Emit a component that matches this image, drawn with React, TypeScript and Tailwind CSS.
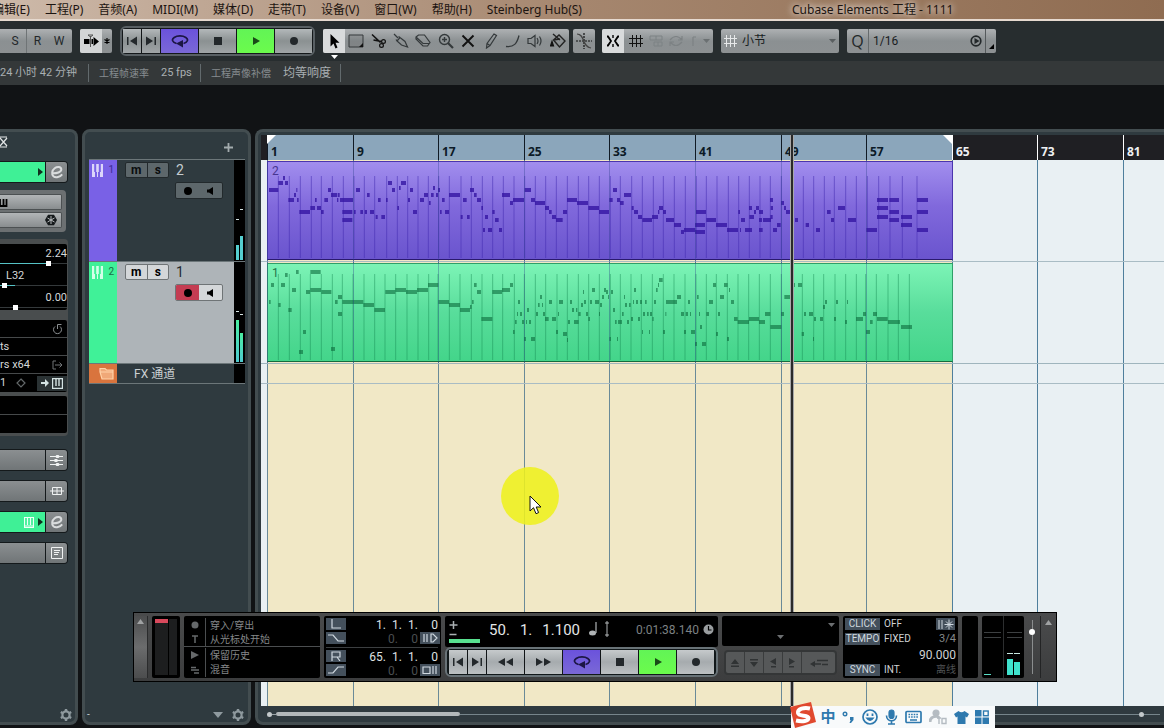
import React from "react";

/* ---------- data ---------- */

const MENUS = ["编辑(E)", "工程(P)", "音频(A)", "MIDI(M)", "媒体(D)", "走带(T)", "设备(V)", "窗口(W)", "帮助(H)", "Steinberg Hub(S)"];

const BAR_LABELS = [1, 9, 17, 25, 33, 41, 49, 57, 65, 73, 81];
const EIGHT_BARS = 85.6;
const CYCLE_END = 8;

/* Notes are x, y, length triples in thirds of a pixel; SECOND is the start of the later page. */
const SECOND = 1035;

const V_NOTES_A = "42,180,28 70,159,14 84,144,6 90,159,9 100,210,17 117,195,6 124,180,2 126,210,5 133,246,32 166,234,14 180,210,5 186,234,12 198,246,8 208,210,11 219,180,9 228,195,18 246,210,4 248,195,6 255,210,39 262,246,30 262,270,30 297,246,5 303,180,12 316,246,8 329,246,7 345,246,12 336,195,8 369,210,8 362,261,6 379,261,11 393,210,5 399,159,12 411,180,9 432,174,5 438,159,15 427,234,5 465,180,9 459,210,6 474,246,12 495,210,12 507,195,12 522,219,5 528,195,8 534,174,6 543,195,6 549,180,6 555,246,5 561,210,8 570,246,12 582,195,33 624,210,11 617,261,6 636,261,8 645,180,12 657,195,8 666,210,12 679,234,5 690,261,9 684,300,6 699,300,12 712,246,7 720,270,11 732,300,9 741,195,24 765,219,9 774,210,33 809,180,19 828,210,12 840,219,30 870,234,12 882,246,8 891,261,12 903,270,20 924,246,12 936,210,30 966,219,33 1000,234,32 1032,246,30";
const V_NOTES_B = "28,210,10 39,180,12 51,210,9 60,219,11 72,195,21 95,234,6 102,246,12 114,261,12 127,270,29 156,261,18 174,246,4 177,234,12 189,246,9 198,270,24 222,285,21 243,306,9 252,300,34 288,246,30 285,285,30 285,306,30 319,270,29 348,285,33 381,300,33 415,246,5 423,270,12 420,300,2 435,300,21 447,234,9 448,261,14 462,246,6 468,234,9 477,246,12 477,270,9 477,300,11 489,270,24 510,210,9 512,234,7 511,261,7 519,300,12 531,285,11 543,219,9 552,234,6 558,246,12 585,270,9 617,285,10 648,300,12 681,246,11 693,270,9 714,234,21 744,270,24 799,300,32 831,210,33 831,234,33 831,261,33 868,210,29 868,246,29 868,270,29 903,261,33 903,285,33 951,210,33 951,246,33 951,300,33";
const V_LINES_A = [70, 103, 136, 169, 199, 232, 265, 297, 328, 359, 395, 427, 458, 489, 520, 551, 583, 618, 649, 682, 713, 745, 777, 809, 841, 872, 904, 937, 970, 1001, 1033];
const V_LINES_B = [31, 61, 95, 127, 160, 190, 223, 256, 289, 319, 351, 385, 416, 448, 480, 511, 544, 610, 641, 673, 703, 737, 769, 802, 836, 870, 907, 951];

const G_NOTES_A = "42,516,5 48,465,9 70,525,7 78,465,12 90,435,8 100,540,10 111,480,12 123,426,8 132,666,12 144,606,9 153,486,12 166,426,31 166,480,32 199,486,30 228,657,12 240,516,8 249,501,12 249,552,12 262,516,63 325,525,32 358,540,32 391,486,30 421,480,32 453,486,33 486,480,33 519,465,31 550,516,32 582,525,33 615,540,30 645,531,5 651,516,5 657,465,8 666,486,12 679,567,33 712,486,29 741,480,24 765,465,9 774,606,5 780,576,5 786,552,3 789,516,6 795,552,6 801,576,6 807,627,6 813,576,3 816,540,6 822,576,6 828,627,12 843,552,6 849,525,5 855,501,6 861,525,3 864,552,6 870,567,11 882,516,9 891,567,12 903,606,6 909,552,3 912,516,12 924,612,12 936,630,2 939,576,6 945,516,6 951,540,6 957,576,14 963,540,4 970,552,7 978,525,6 984,486,3 987,516,6 993,552,6 1000,567,5 1005,516,6 1011,480,9 1020,516,12 1032,552,2 1035,525,6 1041,501,6";
const G_NOTES_B = "12,480,6 18,486,6 24,501,2 33,486,6 39,540,6 28,627,5 45,576,5 51,627,3 54,576,12 66,552,5 72,501,3 75,525,6 81,576,6 87,525,5 93,567,6 99,516,3 102,480,6 108,516,6 114,567,6 120,516,6 126,606,3 129,552,6 135,516,5 141,552,5 147,606,3 150,552,6 157,567,4 162,516,6 168,480,5 174,465,3 177,450,11 189,606,6 196,552,2 198,516,33 231,501,12 243,552,9 257,552,7 252,606,6 264,516,6 270,552,3 273,606,12 285,642,6 291,501,5 297,552,3 300,591,6 306,642,12 319,552,8 327,516,12 339,465,9 348,612,6 354,552,6 360,501,12 372,465,11 381,627,6 387,480,3 393,516,9 402,567,11 413,576,34 447,567,30 477,576,18 495,552,16 511,591,33 543,552,9 553,501,17 582,465,3 594,465,12 605,612,7 612,552,6 627,552,12 639,627,3 642,567,6 660,567,9 669,531,6 675,516,6 702,567,6 708,516,6 735,576,6 741,516,3 768,567,21 789,552,9 798,606,12 810,576,8 819,552,12 831,567,32 864,576,36 903,591,33";
const G_LINES_A = [70, 103, 136, 166, 199, 232, 262, 294, 327, 359, 390, 422, 456, 489, 521, 549, 583, 615, 649, 681, 713, 743, 778, 808, 841, 872, 906, 937, 970, 1001, 1033];
const G_LINES_B = [31, 61, 93, 124, 157, 190, 222, 255, 288, 319, 349, 382, 414, 446, 478, 511, 544, 607, 641, 671, 705, 737, 769, 797, 829, 864, 895, 928];

type Note = { x: number; y: number; w: number };
const parse = (text: string, offset: number): Note[] =>
  text.split(" ").map((t) => {
    const [x, y, w] = t.split(",").map(Number);
    return { x: x + offset, y, w };
  });

const VIOLET = {
  notes: [...parse(V_NOTES_A, 0), ...parse(V_NOTES_B, SECOND)],
  lines: [...V_LINES_A, ...V_LINES_B.map((x) => x + SECOND)],
};
const GREEN = {
  notes: [...parse(G_NOTES_A, 0), ...parse(G_NOTES_B, SECOND)],
  lines: [...G_LINES_A, ...G_LINES_B.map((x) => x + SECOND)],
};

/* ---------- icons ---------- */

type IconProps = { w?: number; h?: number; className?: string; children: React.ReactNode };
const Icon = ({ w = 16, h = 16, className = "", children }: IconProps) => (
  <svg width={w} height={h} viewBox={`0 0 ${w} ${h}`} className={`shrink-0 ${className}`} fill="none" stroke="currentColor" strokeWidth="1.2" aria-hidden="true">
    {children}
  </svg>
);

const Gear = () => (
  <Icon w={14} h={14} className="text-[#8f9a9f]">
    <circle cx="7" cy="7" r="3.6" strokeWidth="2.2" />
    <path d="M7 1v2M7 11v2M1.8 4l1.8 1M10.4 9l1.8 1M1.8 10l1.8-1M10.4 5l1.8-1" strokeWidth="2.4" />
  </Icon>
);
const Keys = ({ className = "" }: { className?: string }) => (
  <Icon w={11} h={13} className={className}>
    <path d="M0 0h2.200v8h.8v5H0zM4.200 0h2.600v8H6v5H5V8h-.8zM8.800 0H11v13H8V8h.8z" fill="currentColor" stroke="none" />
  </Icon>
);
const EditE = () => (
  <Icon w={14} h={14} className="text-[#d9dcdd]">
    <path d="M1.500 8.200c5 .4 10.200-1 9.800-4C11 1.600 7.200 1.400 4.700 3.200 1.900 5.200 1.300 9.400 3.400 11.300c2.400 2 6.600.6 8.800-2" strokeWidth="2" />
  </Icon>
);
const SmallRight = () => (
  <Icon w={5} h={8}><path d="M0 0l5 4-5 4z" fill="#10301f" stroke="none" /></Icon>
);
const Down = ({ className = "" }: { className?: string }) => (
  <Icon w={7} h={4} className={className}><path d="M0 0h7L3.500 4z" fill="currentColor" stroke="none" /></Icon>
);
const Up = ({ className = "" }: { className?: string }) => (
  <Icon w={7} h={5} className={className}><path d="M0 5h7L3.500 0z" fill="currentColor" stroke="none" /></Icon>
);

const TOOLS: { name: string; icon: React.ReactNode }[] = [
  { name: "选择", icon: <Icon><path d="M4.500 1v12.500l3-3 2 5 2-.9-2-4.800h4z" fill="#000" stroke="none" /></Icon> },
  { name: "范围", icon: <Icon><path d="M1 2h14v12H1z" strokeWidth="1" fill="#00000014" /><path d="M15 10v4h-4z" fill="#111" stroke="none" /></Icon> },
  { name: "分割", icon: <Icon><path d="M1 1.500l8.500 8M2.500 7l8 1.500" strokeWidth="1.600" stroke="#111" /><circle cx="12.500" cy="8.500" r="1.900" stroke="#111" /><circle cx="10.500" cy="12.500" r="1.900" stroke="#111" /></Icon> },
  { name: "胶合", icon: <Icon><path d="M1 1l4 4M4 8l3-3.500 5 4 2.500 5.500-6-2zM7 4.500L5.500 3.500M4 8L3 6.500" /></Icon> },
  { name: "擦除", icon: <Icon><path d="M1 4l2.500-2h6l5.500 7.500-2.500 3.500H8L1 6zM1 4l7 6.500h6" /></Icon> },
  { name: "缩放", icon: <Icon><circle cx="6.500" cy="6.500" r="5" strokeWidth="1.400" /><path d="M6.500 4v5M4 6.500h5" strokeWidth="1.400" /><path d="M10 10l5 5" strokeWidth="2.200" /></Icon> },
  { name: "静音", icon: <Icon><path d="M2.500 2.500l11 11M13.500 2.500l-11 11" strokeWidth="1.900" stroke="#111" /></Icon> },
  { name: "绘制", icon: <Icon><path d="M11 1l2.500 1.500L7 12.500 3.500 15 4 10.500zM4 10.500l3 2" /></Icon> },
  { name: "直线", icon: <Icon><path d="M1 13.500c8 1 11-3 13-11" strokeWidth="1.300" /></Icon> },
  { name: "试听", icon: <Icon><path d="M1 5.500h3L8 2.500v11L4 10.500H1z" /><path d="M10 5q2 3 0 6M12.500 3.500q3 4.500 0 9" /></Icon> },
  { name: "颜色", icon: <Icon><path d="M3.500 7L9 2l6 6-5.500 6zM3.500 7L10 6M3 1l7 6" strokeWidth="1.400" stroke="#222" /><path d="M2 8.500l1.500 4.500h-3z" fill="#111" stroke="#111" /></Icon> },
];

/* ---------- shared pieces ---------- */

const steel = "bg-linear-to-b from-[#aeb1b3] via-[#8b9092] to-[#8d9193]";

function TransportKeys({ wide = false }: { wide?: boolean }) {
  const plain = wide
    ? "bg-linear-to-b from-[#c6cacc] via-[#a6abae] to-[#bcc0c2]"
    : "bg-linear-to-b from-[#b3b8ba] via-[#8b9192] to-[#a0a5a7]";
  const key = "flex h-6 items-center justify-center text-[#23282b]";
  return (
    <div className="flex w-max gap-px bg-[#111517]">
      <button aria-label="上一标记" className={`${key} w-[18px] ${plain}`}><Icon w={12} h={10}><path d="M1 1h1.500v8H1zM11 .5v9L4 5z" fill="currentColor" stroke="none" /></Icon></button>
      <button aria-label="下一标记" className={`${key} w-[18px] ${plain}`}><Icon w={12} h={10}><path d="M9.500 1H11v8H9.500zM1 .5v9L8 5z" fill="currentColor" stroke="none" /></Icon></button>
      {wide && <button aria-label="快退" className={`${key} w-[37px] ${plain}`}><Icon w={17} h={10}><path d="M8 1v8L1 5zM16 1v8L9 5z" fill="currentColor" stroke="none" /></Icon></button>}
      {wide && <button aria-label="快进" className={`${key} w-[37px] ${plain}`}><Icon w={17} h={10}><path d="M1 1v8l7-4zM9 1v8l7-4z" fill="currentColor" stroke="none" /></Icon></button>}
      <button aria-label="循环" className={`${key} w-[37px] bg-linear-to-b from-[#6b52dc] to-[#7a68d6]`}>
        <Icon w={18} h={14}><path d="M5.500 9.500A7.500 4 0 1 1 12.500 9.500" strokeWidth="1.700" stroke="#1c1644" /><path d="M5 9.500l7-3.500v7.500z" fill="#1c1644" stroke="none" /></Icon>
      </button>
      <button aria-label="停止" className={`${key} w-[37px] ${plain}`}><Icon w={10} h={10}><path d="M1 1h8v8H1z" fill="currentColor" stroke="none" /></Icon></button>
      <button aria-label="播放" className={`${key} w-[37px] bg-linear-to-b from-[#62f456] to-[#6bfb4c]`}><Icon w={10} h={10}><path d="M2 1v8l7-4z" fill="#1a4a18" stroke="none" /></Icon></button>
      <button aria-label="录音" className={`${key} w-[37px] ${plain}`}><Icon w={10} h={10}><circle cx="5" cy="5" r="4" fill="currentColor" stroke="none" /></Icon></button>
    </div>
  );
}

function MenuBar() {
  return (
    <header className="flex h-[21px] shrink-0 items-center border-b-2 border-[#e6d9cf] bg-linear-to-r from-[#cdb9a9] via-[#a5866e] to-[#8f6c51] font-['Noto_Sans','Noto_Sans_CJK_SC',sans-serif] text-xs whitespace-nowrap text-[#1c1410] [text-shadow:0_0_6px_#fff,0_0_8px_#fff9]">
      <nav className="-ml-2 flex w-[800px] shrink-0 gap-[15px]">
        {MENUS.map((m) => (
          <button key={m}>{m}</button>
        ))}
      </nav>
      <h1>Cubase Elements 工程 - 1111</h1>
    </header>
  );
}

function Toolbar() {
  return (
    <div className="flex h-10 shrink-0 items-center bg-[#272d2f] text-[#23282a]">
      <div className={`mr-2 flex h-6 w-[72px] shrink-0 items-center rounded-r-xs pl-1 text-xs ${steel}`}>
        <button className="w-[22px]">S</button>
        <button className="h-6 w-[22px] border-l border-[#6f7476]">R</button>
        <button className="w-[22px]">W</button>
      </div>
      <div className={`mr-2 flex h-6 w-8 shrink-0 overflow-hidden rounded-xs ${steel}`}>
        <button aria-label="自动滚动" className="flex w-[22px] items-center justify-center bg-[#d3d5d6] text-black">
          <Icon w={17} h={14}><path d="M1 5h5.500v5H1zM10 5v5H8.500V5zM10.500 3L16 7.500 10.500 12z" fill="currentColor" stroke="none" /><path d="M7.500 2v11M5 1h5L7.500 3z" strokeWidth="1" stroke="#555" /></Icon>
        </button>
        <button aria-label="自动滚动设置" className="flex flex-1 items-center justify-center text-black">
          <Icon w={8} h={8}><path d="M4 1v6M1.500 2.500l5 3M6.500 2.500l-5 3" /></Icon>
        </button>
      </div>
      <div className="mr-2 rounded-md border-2 border-[#596064] bg-[#14181a] p-px">
        <TransportKeys />
      </div>
      <div className={`mr-1 flex h-6 w-[246px] shrink-0 rounded-xs ${steel}`}>
        {TOOLS.map((t, i) => (
          <button key={t.name} aria-label={t.name} className={i === 0 ? "relative flex w-[22px] items-center justify-center rounded-l-xs bg-[#d9dbdc]" : "flex flex-1 items-center justify-center text-[#34393b]"}>
            {t.icon}
            {i === 0 && <Down className="absolute -bottom-[6px] left-2 text-white" />}
          </button>
        ))}
      </div>
      <button aria-label="交叉淡化" className={`mr-[7px] flex h-6 w-[22px] shrink-0 items-center justify-center rounded-xs ${steel}`}>
        <Icon w={18} h={18}><path d="M1 9h16M9 1v16" strokeDasharray="2 1" stroke="#111" /><path d="M2 2c8 0 5 13 14 14" stroke="#444" /></Icon>
      </button>
      <div className={`mr-2 flex h-6 w-[111px] shrink-0 items-center rounded-xs ${steel}`}>
        <button aria-label="吸附" className="flex h-6 w-[22px] items-center justify-center rounded-l-xs bg-[#d9dbdc] text-black">
          <Icon><path d="M2 3.500h1L6 8l-3 4.500H2M14 3.500h-1L10 8l3 4.500h1" strokeWidth="1.800" /><path d="M8 2v3M8 11v3" strokeWidth="1.400" /></Icon>
        </button>
        <button aria-label="网格" className="flex w-6 justify-center"><Icon w={14} h={14}><path d="M0 4.500h14M0 9.500h14M3.500 1v12M7.500 1v12M11.500 1v12" strokeWidth="1" stroke="#111" /></Icon></button>
        <button aria-label="相对网格" className="flex w-4 justify-center text-[#7d8284]"><Icon w={14} h={12}><path d="M1 1h12v4H1zM5 7h8v4H5zM7 1v4M9 7v4" strokeWidth="1" /></Icon></button>
        <button aria-label="循环网格" className="flex w-6 justify-center text-[#7d8284]"><Icon w={14} h={12}><path d="M1 5q6-7 12 0M1 7q6 7 12 0M9 5h4V1M5 7H1v4" /></Icon></button>
        <button aria-label="更多" className="flex flex-1 items-center justify-between pr-[3px] text-[#6b7072]"><Icon w={8} h={12}><path d="M5 2v9M5 2h3" stroke="#7d8284" /></Icon><Down /></button>
      </div>
      <label className={`mr-2 flex h-6 w-[118px] shrink-0 items-center rounded-xs px-[3px] ${steel}`}>
        <Icon w={14} h={14} className="text-[#e6e8e9]"><path d="M0 4.500h13M0 9.500h13M2.500 1v12M6.500 1v12M10.500 1v12" strokeWidth="1" /></Icon>
        <select aria-label="网格类型" className="flex-1 appearance-none bg-transparent pl-1 text-xs text-[#191d1f]"><option>小节</option></select>
        <Down className="text-[#5a5f61]" />
      </label>
      <div className={`flex h-6 w-[149px] shrink-0 items-center rounded-xs ${steel}`}>
        <span className="w-[21px] text-center font-['Open_Sans','Noto_Sans',sans-serif] text-base">Q</span>
        <select aria-label="量化" className="h-6 flex-1 appearance-none border-l border-[#666b6d] bg-transparent pl-1 text-xs text-[#191d1f]"><option>1/16</option></select>
        <button aria-label="应用量化" className="pr-[3px]"><Icon w={12} h={12}><circle cx="6" cy="6" r="4.800" strokeWidth="1.700" /><path d="M4.500 3v6L9.500 6z" fill="currentColor" stroke="none" /></Icon></button>
        <button aria-label="量化面板" className="flex h-6 w-[11px] items-end justify-center border-l border-[#555a5c] pb-1"><Icon w={5} h={5}><path d="M5 0v5H0z" fill="#000" stroke="none" /></Icon></button>
      </div>
    </div>
  );
}

function InfoLine() {
  const cell = "flex h-[18px] items-center border-r border-[#626a6d]";
  return (
    <div className="flex h-6 shrink-0 items-center bg-[#343839] whitespace-nowrap text-[#a9afb2]">
      <div className={`${cell} w-[89px] text-[11px]`}>24 小时 42 分钟</div>
      <div className={`${cell} w-[112px] gap-3 pl-[10px]`}><span className="text-[10px] text-[#868c8f]">工程帧速率</span><span className="text-[11px]">25 fps</span></div>
      <div className={`${cell} w-[140px] gap-3 pl-[10px]`}><span className="text-[10px] text-[#868c8f]">工程声像补偿</span><span className="text-xs">均等响度</span></div>
    </div>
  );
}

/* ---------- inspector ---------- */

function Fader({ value, label, level, lit }: { value: number; label: string; level: string; lit: number }) {
  return (
    <label className="flex h-[22px] flex-col">
      <span className={`h-[17px] text-[11px] leading-[20px] ${level}`}>{label}</span>
      <span className="relative flex h-[5px] items-center">
        <span className="h-px w-full bg-[#34393b]" />
        <span className="absolute left-0 h-px bg-[#55c3c6]" style={{ width: lit }} />
        <input type="range" aria-label={label} defaultValue={value} min={0} max={66} className="absolute inset-x-0 h-[5px] w-full appearance-none bg-transparent [&::-webkit-slider-thumb]:h-[5px] [&::-webkit-slider-thumb]:w-[5px] [&::-webkit-slider-thumb]:appearance-none [&::-webkit-slider-thumb]:bg-white" />
      </span>
    </label>
  );
}

function SectionRow({ name, active, children }: { name: string; active?: boolean; children: React.ReactNode }) {
  return (
    <button aria-label={name} className="flex h-[22px] w-[68px] shrink-0 overflow-hidden rounded-r border border-l-0 border-[#14191b]">
      <span className={active ? "flex h-full w-[45px] items-center justify-end gap-1 bg-[#3ff096] pr-0.5" : "h-full w-[45px] bg-linear-to-b from-[#8b8f91] to-[#707577]"}>
        {active && name !== "音轨" && <Icon w={10} h={11} className="text-[#eefff7]"><path d="M.5.5h9v10h-9zM3.500 0v8M6.500 0v8M.5 9h9" /></Icon>}
        {active && <SmallRight />}
      </span>
      <span className="flex h-full flex-1 items-center justify-center border-l border-[#14191b] bg-linear-to-b from-[#8b8f91] to-[#707577] text-[#f0f2f2]">{children}</span>
    </button>
  );
}

const panel = "border-[3px] border-[#434d50] bg-[#2f3a3f]";

function Inspector() {
  const row = "flex h-[18px] items-center border-b border-[#46494a] pr-1 text-[11px] leading-none";
  return (
    <aside className={`flex w-[78px] shrink-0 flex-col rounded-r-lg border-l-0 ${panel}`}>
      <div className="flex h-[29px] shrink-0 items-start pt-1 text-[#e3e6e7]">
        <Icon w={8} h={12}><path d="M0 1h7M0 11h7M0 2l7 8M7 2l-7 8" /></Icon>
      </div>
      <SectionRow name="音轨" active><EditE /></SectionRow>
      <div className="mt-[7px] flex h-[42px] w-[66px] flex-col gap-0.5 rounded-r bg-[#6c7072] py-1 pr-1">
        <button aria-label="乐器面板" className="flex h-4 items-center rounded-r-xs border border-l-0 border-[#4c5052] bg-linear-to-b from-[#b2b5b7] to-[#898d8f] text-black"><Icon w={8} h={9}><path d="M0 1v7h6.500V1M3.500 1v7" strokeWidth="1.800" /></Icon></button>
        <button aria-label="冻结" className="flex h-4 items-center justify-end rounded-r-xs border border-l-0 border-[#4c5052] bg-linear-to-b from-[#b2b5b7] to-[#898d8f] pr-1 text-[#15191b]">
          <Icon w={12} h={12}><path d="M3 .8h6L12 6 9 11.200H3L0 6z" fill="currentColor" stroke="none" /><path d="M6 2v8M2.500 4l7 4M9.500 4l-7 4" strokeWidth="1" stroke="#b5b8ba" /></Icon>
        </button>
      </div>
      <div className="mt-[7px] flex w-[68px] flex-col rounded-r bg-[#494d4e] pt-[5px] pr-px pb-[3px] text-[#d5d8d9]">
        <div className="h-[66px] rounded-r-xs bg-black">
          <Fader value={49} lit={46} label="2.24" level="text-right" />
          <Fader value={2} lit={15} label="L32" level="pl-1.5" />
          <Fader value={14} lit={0} label="0.00" level="text-right" />
        </div>
        <div className="mt-[10px] rounded-r-xs bg-black">
          <div className={`${row} justify-end`}><Icon w={12} h={12} className="text-[#8b8f91]"><path d="M4 3.500a4 4 0 1 0 5 0M6.500 6V1.500h4" strokeWidth="1" /></Icon></div>
          <div className={row}>ts</div>
          <div className={`${row} justify-between`}><span className="whitespace-nowrap">rs x64</span><Icon w={11} h={10} className="text-[#707476]"><path d="M4 1H1v8h3M3 5h7M7.500 2.500L10 5 7.500 7.500" strokeWidth="1" /></Icon></div>
          <div className="flex h-[18px] items-center text-[11px]">
            <span className="w-4">1</span>
            <Icon w={10} h={10} className="text-[#63686a]"><path d="M5 1l4 4-4 4-4-4z" /></Icon>
            <span className="ml-auto flex h-[15px] items-center gap-[3px] bg-[#2a3234] px-1 text-[#d4e2e2]"><Icon w={8} h={8}><path d="M0 3h4V0l4 4-4 4V5H0z" fill="currentColor" stroke="none" /></Icon><Icon w={11} h={11}><path d="M.5.5h10v10H.5zM4 0v8M7 0v8" strokeWidth="1.400" /></Icon></span>
          </div>
        </div>
        <div className="mt-1 h-[37px] rounded-r-xs bg-black"><div className="h-[19px] border-b border-[#46494a]" /></div>
      </div>
      <div className="mt-[13px] flex flex-col gap-[9px]">
        <SectionRow name="均衡"><Icon w={13} h={13}><path d="M0 2.500h13M0 6.500h13M0 10.500h13" strokeWidth="1" /><path d="M5 2.500l1.500-1.500h2L10 2.500 8.500 4h-2zM3.500 6.500L5 5h2l1.500 1.500L7 8H5zM5 10.500L6.500 9h2l1.500 1.500L8.500 12h-2z" fill="currentColor" stroke="none" /></Icon></SectionRow>
        <SectionRow name="发送"><Icon w={14} h={10}><path d="M0 5h14M2.500 1.500h9v7h-9zM7 1.500v7" strokeWidth="1" /></Icon></SectionRow>
        <SectionRow name="乐器" active><EditE /></SectionRow>
        <SectionRow name="记事"><Icon w={12} h={12}><path d="M.5.500h11v11H.5zM3 3.500h6M3 5.500h5M3 7.500h4" strokeWidth="1" /></Icon></SectionRow>
      </div>
      <button aria-label="设置检查器" className="mt-auto mr-[2px] self-end"><Gear /></button>
    </aside>
  );
}

/* ---------- track list ---------- */

type Channel = { level: number; hold: number };
function Meter({ channels, tone }: { channels: Channel[]; tone: string }) {
  return (
    <div className="flex w-[11px] items-end justify-center gap-px bg-black pb-px">
      {channels.map((c, i) => (
        <div key={i} className="flex flex-col">
          <span className="h-px w-[3px] bg-[#d7e6e6]" style={{ marginBottom: c.hold }} />
          <span className={`w-[3px] ${tone}`} style={{ height: c.level }} />
        </div>
      ))}
    </div>
  );
}

function Track({ index, name, selected, channels }: { index: number; name: string; selected?: boolean; channels: Channel[] }) {
  const face = selected ? "border-[#6f7476] bg-[#d4d7d9] text-black" : "border-[#22292c] bg-[#5d676b] text-[#0a0d0e]";
  return (
    <li className="flex h-[102px] border-t border-[#6c7679]">
      <div className={selected ? "flex w-7 justify-between bg-[#40f198] px-[3px] pt-1 text-[10px] leading-3 text-[#1b6b45]" : "flex w-7 justify-between bg-[#7961e6] px-[3px] pt-1 text-[10px] leading-3 text-[#3b2a92]"}>
        <Keys className={selected ? "text-[#d5ffe9]" : "text-[#dcd6fa]"} />
        <span>{index}</span>
      </div>
      <div className={selected ? "flex-1 bg-[#aeb4b8] pt-0.5 pl-2 text-[#262b2e]" : "flex-1 bg-[#2f3a3f] pt-0.5 pl-2 text-[#c5cccf]"}>
        <div className="flex items-center gap-[7px]">
          <div className={`flex h-4 w-11 rounded-xs border text-xs leading-none font-bold ${face}`}>
            <button className="w-[22px] border-r border-inherit">m</button>
            <button className="w-[21px]">s</button>
          </div>
          <span className="text-sm leading-4">{name}</span>
        </div>
        <div className={`mt-1 ml-[50px] flex h-[17px] w-12 overflow-hidden rounded-xs border ${face}`}>
          <button aria-label="录音启用" className={selected ? "flex w-[23px] items-center justify-center bg-[#c43c52]" : "flex w-[23px] items-center justify-center"}><Icon w={8} h={8}><circle cx="4" cy="4" r="4" fill="#000" stroke="none" /></Icon></button>
          <button aria-label="监听" className="flex flex-1 items-center justify-center"><Icon w={7} h={8}><path d="M0 2.500h2L6 0v8L2 5.500H0z" fill="#000" stroke="none" /></Icon></button>
        </div>
      </div>
      <Meter channels={channels} tone={selected ? "bg-linear-to-b from-[#4beea0] to-[#4fc9cf]" : "bg-[#55cfd0]"} />
    </li>
  );
}

function TrackList() {
  return (
    <section className={`flex w-[169px] shrink-0 flex-col rounded-lg ${panel}`}>
      <div className="flex h-[27px] items-center justify-end px-[15px] pt-1">
        <button aria-label="添加音轨"><Icon w={9} h={9} className="text-[#a3abae]"><path d="M4.500 0v9M0 4.500h9" strokeWidth="1.800" /></Icon></button>
      </div>
      <ul className="mr-[3px] ml-1">
        <Track index={1} name="2" channels={[{ level: 15, hold: 25 }, { level: 24, hold: 26 }]} />
        <Track index={2} name="1" selected channels={[{ level: 42, hold: 8 }, { level: 29, hold: 18 }]} />
        <li className="flex h-[21px] border-y border-[#6c7679] text-xs text-[#ccd1d3]">
          <span className="flex w-7 items-center justify-center bg-[#d9743d] pl-2"><Icon w={16} h={13} className="text-[#ffd2a8]"><path d="M1 3V1.500h5L7.500 3H14v9H3L1 5zM1 5h13" fill="#f0a878" /></Icon></span>
          <span className="flex-1 pl-[17px] leading-5">FX 通道</span>
          <span className="w-[11px] bg-black" />
        </li>
      </ul>
      <div className="mt-auto mr-[3px] flex items-center gap-2">
        <span className="ml-0.5 text-[10px] leading-none text-[#c5cccf]">-</span>
        <Icon w={10} h={6} className="ml-auto text-[#8f9a9f]"><path d="M0 0h10L5 6z" fill="currentColor" stroke="none" /></Icon>
        <button aria-label="设置音轨列表"><Gear /></button>
      </div>
    </section>
  );
}

/* ---------- arrangement ---------- */

const edge = (i: number) => Math.round(i * EIGHT_BARS);

function MidiEvent({ name, data, violet }: { name: string; data: { notes: Note[]; lines: number[] }; violet?: boolean }) {
  const top = violet ? 93 : 399;
  return (
    <div
      style={{ width: edge(CYCLE_END) + 1 }}
      className={violet
        ? "relative h-[99px] border border-[#4b35ad] border-b-[#2a1a6e] bg-linear-to-b from-[#a28eee] via-[#8169dc] via-45% to-[#6a54ce] text-[#473590]"
        : "relative h-[99px] border border-[#2f9f68] border-b-[#156b3e] bg-linear-to-b from-[#7cf4b6] via-[#58dd9b] via-50% to-[#43d58a] text-[#1f7549]"}
    >
      <span className="block pl-1 text-xs leading-[18px]">{name}</span>
      <svg className="absolute inset-0" width="684" height="97" viewBox={`39 ${top + 3} 2052 291`} preserveAspectRatio="none" aria-hidden="true">
        {data.lines.map((x) => (
          <rect key={x} x={x - 1.5} y={violet ? 138 : 432} width="3" height={violet ? 246 : 258} fill={violet ? "#3f28b0" : "#158a50"} opacity={violet ? 0.5 : 0.45} />
        ))}
        {data.notes.map((n, i) => (
          <rect key={i} x={n.x} y={n.y - 6} width={Math.max(n.w, 3)} height="12" fill={violet ? "#3515a2" : "#0c6b3c"} opacity={violet ? 0.8 : 0.6} />
        ))}
      </svg>
    </div>
  );
}

function Arrangement() {
  return (
    <main className={`flex min-w-0 flex-1 flex-col rounded-l-lg border-r-0 ${panel} pt-[3px] pl-[3px]`}>
      <div className="relative flex min-h-0 flex-1 flex-col overflow-hidden bg-[#e9f0f3]">
        <div className="flex h-[25px] shrink-0 bg-[#1f1f23] pl-1.5">
          {BAR_LABELS.map((b, i) => (
            <div
              key={b}
              style={{ width: edge(i + 1) - edge(i) }}
              className={i < CYCLE_END
                ? "relative shrink-0 border-l border-[#101a24] bg-[#8ba6bb] pt-[9px] pl-[3px] font-['Noto_Sans',sans-serif] text-xs leading-4 font-bold text-[#0c1a26]"
                : "relative shrink-0 border-l border-white pt-[9px] pl-[3px] font-['Noto_Sans',sans-serif] text-xs leading-4 font-bold text-[#eef0f2]"}
            >
              {b}
              {i === 0 && <svg className="absolute top-0 -left-px" width="9" height="9" aria-hidden="true"><path d="M0 0h9L0 9z" fill="#fff" /></svg>}
              {i === CYCLE_END - 1 && <svg className="absolute top-0 right-0" width="9" height="9" aria-hidden="true"><path d="M0 0h9v9z" fill="#fff" /></svg>}
            </div>
          ))}
        </div>
        <div className="relative min-h-0 flex-1 pl-1.5">
          <div className="absolute inset-0 flex pl-1.5">
            {BAR_LABELS.map((b, i) => (
              <div key={b} style={{ width: edge(i + 1) - edge(i) }} className={i < CYCLE_END ? "shrink-0 border-l border-[#6a8a98] bg-[#f1e8c6]" : "shrink-0 border-l border-[#4f7f9c]"} />
            ))}
          </div>
          <div className="relative -ml-1.5">
            <div className="h-[102px] border-b border-[#a9bcc4] pt-px pl-1.5"><MidiEvent name="2" data={VIOLET} violet /></div>
            <div className="h-[102px] border-b border-[#9fb5bd] pt-px pl-1.5"><MidiEvent name="1" data={GREEN} /></div>
            <div className="h-5 border-b border-[#a9bcc4]" />
          </div>
          <div className="absolute inset-0 flex pl-1.5">
            {BAR_LABELS.slice(0, CYCLE_END).map((b, i) => (
              <div key={b} style={{ width: edge(i + 1) - edge(i) }} className="h-[203px] shrink-0 border-l border-[#2a3f8a59]" />
            ))}
          </div>
        </div>
        {/* playback position */}
        <div className="absolute inset-y-0 left-[529px] w-1 border-r border-l border-[#ffffff99] bg-[#2a2a2a]" />
        {/* click highlight and pointer */}
        <div className="absolute top-[332px] left-60 flex h-[58px] w-[58px] items-center justify-center rounded-full bg-[#eef01ee0]">
          <svg width="13" height="20" viewBox="0 0 13 20" className="mt-[18px] ml-[10px]" aria-hidden="true"><path d="M1 1v15l3.500-3.300 2.500 6 2.600-1.100L7.200 12H12z" fill="#fff" stroke="#111" strokeWidth="1" /></svg>
        </div>
      </div>
      <div className="flex h-4 shrink-0 items-center pr-1 pl-1.5">
        <span className="h-[5px] w-[5px] rounded-full bg-[#c3c9cb]" />
        <span className="h-px w-1 bg-[#98a1a5]" />
        <span className="h-1 w-[184px] rounded-full bg-[#b2b8ba]" />
        <span className="h-px flex-1 bg-[#76858b]" />
        <span className="h-[5px] w-[5px] rounded-full bg-[#c3c9cb]" />
        <span className="h-px w-4 bg-[#76858b]" />
      </div>
    </main>
  );
}

/* ---------- floating transport panel ---------- */

const chip = "flex items-center justify-center bg-[#44505c] text-[#cfd8df]";

function Locator({ label, bar, icon, edgeIcon, punch }: { label: string; bar: string; icon: React.ReactNode; edgeIcon: React.ReactNode; punch: React.ReactNode }) {
  return (
    <div className="flex flex-col gap-0.5">
      <div className="flex h-3">
        <button aria-label={label} className={`${chip} w-5`}>{icon}</button>
        <span className="grid grid-cols-[40px_16px_16px_20px] text-right text-xs leading-[14px] text-[#dfe2e3]"><span>{bar}</span><span>1.</span><span>1.</span><span>0</span></span>
      </div>
      <div className="flex h-3">
        <button aria-label={`${label}打孔`} className={`${chip} w-5`}>{edgeIcon}</button>
        <span className="grid grid-cols-[52px_20px] text-right text-xs leading-[14px] text-[#4a4e50]"><span>0.</span><span>0</span></span>
        <button aria-label={`${label}预卷`} className={`${chip} ml-0.5 w-5`}>{punch}</button>
      </div>
    </div>
  );
}

function TransportPanel() {
  const screen = "rounded-xs bg-black";
  const mode = "flex h-[14px] items-center";
  return (
    <section aria-label="走带" className="absolute top-[612px] left-[133px] flex h-[70px] w-max gap-1 border border-black bg-linear-to-b from-[#4a4b4c] to-[#3c3d3e] py-[3px]">
      <button aria-label="折叠左侧" className="flex w-[14px] items-start justify-center border-r border-[#2a2b2c] bg-linear-to-b from-[#4c4d4e] via-[#6b6c6d] to-[#4c4d4e] pt-[3px]"><Up className="text-[#a0a2a3]" /></button>
      <div className={`flex w-7 gap-px p-[3px] ${screen}`}>
        <div className="w-[13px] bg-[#1d1e1f]"><div className="h-1 bg-[#d8495c]" /></div>
        <div className="flex-1 bg-[#1d1e1f]" />
      </div>
      <div className={`w-[136px] pt-px text-[10px] text-[#85888a] ${screen}`}>
        <div className="flex h-[30px] border-b border-[#4b4e50] pt-px">
          <div className="flex w-[22px] flex-col items-center justify-around border-r border-[#4b4e50] text-[#66696b]">
            <Icon w={8} h={8}><circle cx="4" cy="4" r="3.500" fill="currentColor" stroke="none" /></Icon>
            <Icon w={8} h={8}><path d="M1 1h6M4 1v7" strokeWidth="1.500" /></Icon>
          </div>
          <div className="pl-1"><button className={mode}>穿入/穿出</button><button className={mode}>从光标处开始</button></div>
        </div>
        <div className="flex h-[30px] pt-px">
          <div className="flex w-[22px] flex-col items-center justify-around border-r border-[#4b4e50] text-[#66696b]">
            <Icon w={8} h={8}><path d="M0 0l8 4-8 4z" fill="currentColor" stroke="none" /></Icon>
            <Icon w={8} h={8}><path d="M0 1.500h5M0 4h8M3 7h5" strokeWidth="1.500" /></Icon>
          </div>
          <div className="pl-1"><button className={mode}>保留历史</button><button className={mode}>混音</button></div>
        </div>
      </div>
      <div className={`flex w-[117px] flex-col justify-between py-0.5 pl-0.5 ${screen}`}>
        <Locator label="左定位" bar="1." icon={<Icon w={12} h={10}><path d="M2 0v9h9" /></Icon>} edgeIcon={<Icon w={16} h={10}><path d="M0 2h5l5 6h6" /></Icon>} punch={<Icon w={16} h={10}><path d="M2 1v8M5 1v8M9 1h2l4 4-4 4H9z" /></Icon>} />
        <div className="h-px w-[112px] bg-[#3c3f41]" />
        <Locator label="右定位" bar="65." icon={<Icon w={12} h={10}><path d="M2 10V1h8v5H2M7 6l3 4" /></Icon>} edgeIcon={<Icon w={16} h={10}><path d="M0 8h5l5-6h6" /></Icon>} punch={<Icon w={16} h={10}><path d="M1 2h7v6.500H1zM11 1v8M14 1v8" /></Icon>} />
      </div>
      <div className="flex w-[273px] flex-col">
        <div className={`flex h-[31px] items-start px-1 pt-1 ${screen}`}>
          <div className="flex w-[31px] flex-col items-start gap-0.5 text-[#aab0b2]">
            <Icon w={9} h={17}><path d="M4.500 1v8M.5 5h8M.5 14.500h7" strokeWidth="1.500" /></Icon>
            <span className="h-1 w-[31px] bg-[#58e08f]" />
          </div>
          <output className="flex w-[104px] justify-end gap-[10px] pr-1 text-[15px] leading-5 whitespace-nowrap text-[#e3e6e7]"><span>50.</span><span>1.</span><span>1.100</span></output>
          <button aria-label="主时间格式" className="flex gap-2 pl-1 text-[#b0b4b6]">
            <Icon w={9} h={17}><path d="M8 2v11" /><ellipse cx="4.500" cy="13" rx="3.500" ry="2.500" fill="currentColor" stroke="none" /></Icon>
            <Icon w={4} h={18}><path d="M2 1v16M0 3h4M0 15h4" strokeWidth="1" /></Icon>
          </button>
          <output className="ml-auto text-xs leading-5 text-[#7c8183]">0:01:38.140</output>
          <button aria-label="次时间格式" className="mt-1 ml-1"><Icon w={11} h={11} className="text-[#9a9ea0]"><circle cx="5.500" cy="5.500" r="5" fill="currentColor" stroke="none" /><path d="M5.500 2v4h3" stroke="#000" /></Icon></button>
        </div>
        <div className="flex h-[30px] items-center justify-center rounded-md border-2 border-[#687277] bg-[#11181a]">
          <TransportKeys wide />
        </div>
      </div>
      <div className="flex w-[117px] flex-col gap-1">
        <div className={`flex h-[30px] flex-col justify-between px-1 py-[7px] text-[#6c6f71] ${screen}`}><Down className="self-end" /><Down className="self-center" /></div>
        <div className="mx-0.5 flex h-[25px] rounded border-2 border-[#343637] bg-[#565859] text-[#303334]">
          <button aria-label="标记上移" className="flex w-[19px] items-center justify-center border-r border-[#3a3c3d]"><Icon w={8} h={10}><path d="M0 6h8L4 1zM0 7.500h8V9H0z" fill="currentColor" stroke="none" /></Icon></button>
          <button aria-label="标记下移" className="flex w-[19px] items-center justify-center border-r border-[#3a3c3d]"><Icon w={8} h={10}><path d="M0 4h8L4 9zM0 1h8v1.500H0z" fill="currentColor" stroke="none" /></Icon></button>
          <button aria-label="左移" className="flex w-[19px] items-center justify-center border-r border-[#3a3c3d]"><Icon w={8} h={10}><path d="M7 0v7L1 3.500zM2 8h5v1.500H2z" fill="currentColor" stroke="none" /></Icon></button>
          <button aria-label="右移" className="flex w-[19px] items-center justify-center border-r border-[#3a3c3d]"><Icon w={8} h={10}><path d="M1 0v7l6-3.500zM1 8h5v1.500H1z" fill="currentColor" stroke="none" /></Icon></button>
          <button aria-label="回写" className="flex flex-1 items-center justify-center"><Icon w={18} h={10}><path d="M0 6l5-3v6z" fill="currentColor" stroke="none" /><path d="M5 6h6M7 2.500h11M12 6.500h6" strokeWidth="1.700" /></Icon></button>
        </div>
      </div>
      <div className={`grid w-[115px] grid-cols-[35px_1fr_auto] content-between gap-x-1 p-0.5 text-[10px] leading-3 text-[#cfd2d4] ${screen}`}>
        <button className={`${chip} h-3`}>CLICK</button><span>OFF</span>
        <button aria-label="预备拍" className={`${chip} h-3 w-[19px]`}><Icon w={17} h={11}><path d="M2 1v9M5 1v9M12 .5v10M7.500 5.500h9M9 2.500l6 6M15 2.500l-6 6" strokeWidth="1" /></Icon></button>
        <button className={`${chip} h-3`}>TEMPO</button><span>FIXED</span><span className="text-right text-[11px] text-[#85898b]">3/4</span>
        <output className="col-span-3 text-right text-xs leading-3">90.000</output>
        <button className={`${chip} h-3`}>SYNC</button><span>INT.</span><span className="text-right text-[#505355]">离线</span>
      </div>
      <div className={`w-4 ${screen}`} />
      <div className={`flex w-[42px] justify-between px-0.5 ${screen}`}>
        <div className="flex w-[17px] flex-col">
          <span className="mt-4 h-1.5 border-y border-[#3d4042]" />
          <span className="mt-auto mb-[3px] h-px w-[7px] bg-[#59e0c8]" />
        </div>
        <div className="flex w-[19px] flex-col border-l border-[#2c2e2f] pl-[3px]">
          <span className="mt-4 h-1.5 border-y border-[#3d4042]" />
          <span className="mt-[15px] flex gap-px"><i className="h-px w-[6px] bg-[#c9e8e2]" /><i className="h-px w-[6px] bg-[#c9e8e2]" /></span>
          <span className="mt-auto mb-[3px] flex items-end gap-px"><i className="h-4 w-[6px] bg-[#3fe2cd]" /><i className="h-[13px] w-[6px] bg-[#3fe2cd]" /></span>
        </div>
      </div>
      <div className="flex w-2 flex-col items-center py-1">
        <span className="h-[9px] w-px bg-[#8a8d8e]" />
        <span className="h-1.5 w-1.5 rounded-full bg-white" />
        <span className="w-px flex-1 bg-[#8a8d8e]" />
      </div>
      <button aria-label="折叠右侧" className="flex w-4 items-start justify-center border-l border-[#232425] pt-1"><Up className="text-[#a0a2a3]" /></button>
    </section>
  );
}

/* ---------- input method bar ---------- */

function ImeBar() {
  return (
    <div className="absolute bottom-0 left-[791px] flex h-[22px] w-[204px] items-center bg-[#f8fafb] text-[#2e79ae]">
      <svg width="28" height="28" viewBox="0 0 28 28" className="-mt-1 -ml-0.5 shrink-0" aria-label="输入法">
        <path d="M1 6l21-5 5 20-21 6z" fill="#e0492f" />
        <path d="M21 7.500C15 6 8.500 8 9 12c.6 4 10.500 1.500 10.500 5 0 3-6 4-12.500 2.500" fill="none" stroke="#fff" strokeWidth="4" />
      </svg>
      <div className="flex flex-1 items-center justify-around pr-0.5">
        <button className="text-[15px] leading-4 font-bold">中</button>
        <button aria-label="标点"><Icon w={13} h={14}><circle cx="3" cy="4" r="1.800" strokeWidth="1.400" /><path d="M8 7h3.500v3L9 13H7.500l1.200-3H8z" fill="currentColor" stroke="none" /></Icon></button>
        <button aria-label="表情"><Icon><circle cx="8" cy="8" r="7" strokeWidth="1.700" /><path d="M4.500 9q3.500 5 7 0z" fill="currentColor" /><path d="M5.500 4.500v2.500M10.500 4.500v2.500" strokeWidth="1.800" /></Icon></button>
        <button aria-label="语音"><Icon w={13} h={16}><rect x="4" y="1" width="5" height="8.500" rx="2.500" fill="currentColor" /><path d="M1.500 6.500c0 7 10 7 10 0M6.500 12v3M3 15h7" strokeWidth="1.600" /></Icon></button>
        <button aria-label="软键盘"><Icon w={17} h={14}><rect x="1" y="1.500" width="15" height="11" rx="1" strokeWidth="1.700" /><path d="M3.500 4.500h10M3.500 7h10" strokeWidth="1.500" strokeDasharray="1.600 1" /><path d="M5 10h7" strokeWidth="1.500" /></Icon></button>
        <button aria-label="账户"><Icon w={18} h={16} className="text-[#b5bcc2]"><circle cx="7" cy="4" r="3" fill="currentColor" /><path d="M1 13c0-6 8-7 9-4" strokeWidth="3" /><path d="M8 9h4M10 9v6M13 9.500h4v5h-4z" strokeWidth="1.400" /></Icon></button>
        <button aria-label="皮肤"><Icon w={15} h={14}><path d="M4.500 1q3 2.500 6 0L15 4l-2 3.500-1.500-1V14h-8V6.500l-1.500 1L0 4z" fill="currentColor" stroke="none" /></Icon></button>
        <button aria-label="工具箱"><Icon w={14} h={14}><path d="M0 0h6.500v6.500H0zM0 7.500h6.500V14H0zM7.500 7.500H14V14H7.500z" fill="currentColor" stroke="none" /><rect x="8.500" y="1" width="4.700" height="4.700" strokeWidth="1.400" /></Icon></button>
      </div>
    </div>
  );
}

export default function App() {
  return (
    <div className="relative flex h-screen flex-col overflow-hidden bg-[#111315] font-['Roboto','Noto_Sans_CJK_SC',sans-serif]">
      <MenuBar />
      <Toolbar />
      <InfoLine />
      <div className="flex min-h-0 flex-1 gap-1 pt-11 pb-[3px]">
        <Inspector />
        <TrackList />
        <Arrangement />
      </div>
      <TransportPanel />
      <ImeBar />
    </div>
  );
}
